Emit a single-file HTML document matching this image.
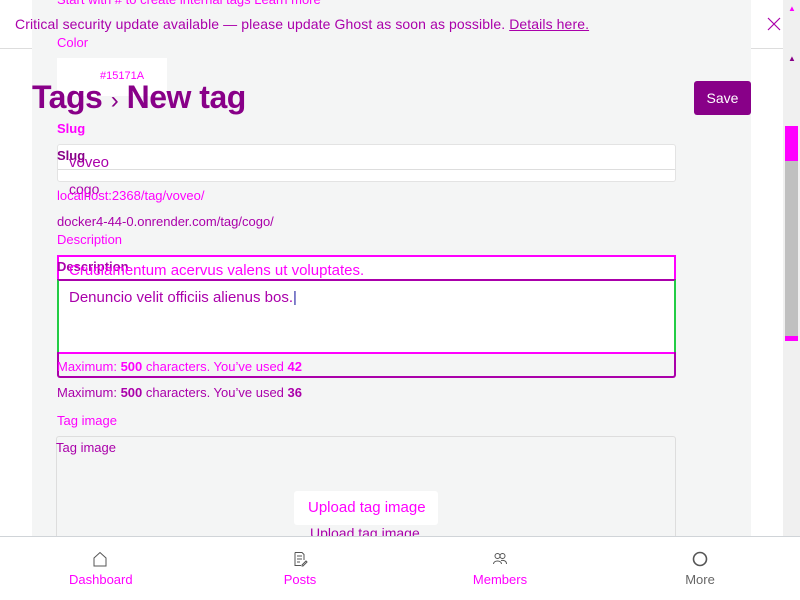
<!DOCTYPE html>
<html><head><meta charset="utf-8"><style>
*{margin:0;padding:0;box-sizing:border-box}
body{width:800px;height:600px;overflow:hidden;background:#fff;font-family:"Liberation Sans",sans-serif;position:relative;font-size:14px}
.a{position:absolute;white-space:nowrap}
.m{color:#f0f}.p{color:#a0a}.d{color:#808}
</style></head><body>
<div class="a" style="left:0;top:48px;width:783px;height:1px;background:#ddd"></div>
<div class="a" style="left:32px;top:0;width:719px;height:536px;background:#f4f5f5"></div>
<div class="a m" style="left:57px;top:-8px;font-size:13px">Start with # to create internal tags Learn more</div>
<div class="a p" style="left:15px;top:16px;font-size:14px;letter-spacing:0.1px">Critical security update available — please update Ghost as soon as possible. <u>Details here.</u></div>
<svg class="a" style="left:767px;top:17px" width="14" height="14" viewBox="0 0 14 14" stroke="#a0a" stroke-width="1.2"><path d="M1 1L13 13M13 1L1 13"/></svg>
<div class="a m" style="left:57px;top:35px;font-size:13px">Color</div>
<div class="a" style="left:57px;top:58px;width:110px;height:38px;background:#fff"></div>
<div class="a m" style="left:100px;top:70px;font-size:11px">#15171A</div>
<div class="a d" style="left:32px;top:79px;font-size:32px;font-weight:bold;letter-spacing:-0.5px">Tags <span style="font-weight:normal;font-size:24px">›</span> New tag</div>
<div class="a" style="left:694px;top:81px;width:57px;height:34px;background:#808;border-radius:3px;color:#fff;font-size:14px;text-align:center;line-height:34px">Save</div>
<div class="a m" style="left:57px;top:121px;font-size:13px;font-weight:bold">Slug</div>
<div class="a" style="left:57px;top:144px;width:619px;height:38px;background:#fff;border:1px solid #e3e3e3;border-radius:3px"></div>
<div class="a" style="left:58px;top:169px;width:617px;height:1px;background:#ddd"></div>
<div class="a d" style="left:57px;top:148px;font-size:13px;font-weight:bold">Slug</div>
<div class="a p" style="left:69px;top:154px;font-size:15px">voveo</div>
<div class="a p" style="left:69px;top:181px;font-size:14px">cogo</div>
<div class="a m" style="left:57px;top:188px;font-size:13px">localhost:2368/tag/voveo/</div>
<div class="a p" style="left:57px;top:214px;font-size:13px">docker4-44-0.onrender.com/tag/cogo/</div>
<div class="a m" style="left:57px;top:232px;font-size:13px">Description</div>
<div class="a" style="left:57px;top:255px;width:619px;height:26px;background:#fff;border:2px solid #f0f;border-bottom:none"></div>
<div class="a" style="left:57px;top:279px;width:619px;height:75px;background:#fff;border-top:2px solid #a0a;border-left:2px solid #2c4;border-right:2px solid #2c4;border-bottom:2px solid #f0f"></div>
<div class="a" style="left:57px;top:352px;width:619px;height:26px;border:2px solid #a0a;border-top:none;border-radius:0 0 3px 3px"></div>
<div class="a p" style="left:57px;top:259px;font-size:13px;font-weight:bold">Description</div>
<div class="a m" style="left:69px;top:262px;font-size:15px">Cruciamentum acervus valens ut voluptates.</div>
<div class="a p" style="left:69px;top:289px;font-size:15px">Denuncio velit officiis alienus bos.<span style="color:#33a">|</span></div>
<div class="a m" style="left:57px;top:359px;font-size:13px">Maximum: <b>500</b> characters. You’ve used <b>42</b></div>
<div class="a p" style="left:57px;top:385px;font-size:13px">Maximum: <b>500</b> characters. You’ve used <b>36</b></div>
<div class="a m" style="left:57px;top:413px;font-size:13px">Tag image</div>
<div class="a" style="left:56px;top:436px;width:620px;height:110px;border:1px solid #ddd;border-radius:3px"></div>
<div class="a p" style="left:56px;top:440px;font-size:13px">Tag image</div>
<div class="a" style="left:294px;top:491px;width:144px;height:34px;background:#fff;border-radius:3px"></div>
<div class="a m" style="left:308px;top:499px;font-size:15px">Upload tag image</div>
<div class="a p" style="left:310px;top:525px;font-size:14px">Upload tag image</div>
<div class="a" style="left:783px;top:0;width:17px;height:536px;background:#f0f0f0"></div>
<div class="a m" style="left:788px;top:4px;font-size:8px">▲</div>
<div class="a d" style="left:788px;top:54px;font-size:8px">▲</div>
<div class="a" style="left:785px;top:126px;width:13px;height:215px;background:#c0c0c0"></div>
<div class="a" style="left:785px;top:126px;width:13px;height:35px;background:#f0f"></div>
<div class="a" style="left:785px;top:336px;width:13px;height:5px;background:#f0f"></div>
<div class="a" style="left:0;top:536px;width:800px;height:64px;background:#fff;border-top:1px solid #d0d4d8"></div>
<svg class="a" style="left:92px;top:551px" width="16" height="16" viewBox="0 0 16 16" fill="none" stroke="#555" stroke-width="1"><path d="M2 7L8 1.5L14 7V15H2Z"/></svg>
<svg class="a" style="left:292px;top:551px" width="16" height="16" viewBox="0 0 16 16" fill="none" stroke="#555" stroke-width="1"><path d="M3 1.5H10L12 3.5V9M3 1.5V14.5H9M5 5H10M5 8H10M5 11H8M10 14L14 10L15 11L11 15H10Z"/></svg>
<svg class="a" style="left:492px;top:551px" width="16" height="16" viewBox="0 0 16 16" fill="none" stroke="#555" stroke-width="1"><circle cx="5.5" cy="5" r="2.5"/><circle cx="10.5" cy="5" r="2.5"/><path d="M1.5 13C1.5 9 9.5 9 9.5 13M9 9.5C12 9 14.5 10 14.5 13"/></svg>
<svg class="a" style="left:692px;top:551px" width="16" height="16" viewBox="0 0 16 16" fill="none" stroke="#555" stroke-width="1.6"><circle cx="8" cy="8" r="6.5"/></svg>
<div class="a m" style="left:69px;top:572px;font-size:13px;width:62px;text-align:center">Dashboard</div>
<div class="a m" style="left:280px;top:572px;font-size:13px;width:40px;text-align:center">Posts</div>
<div class="a m" style="left:470px;top:572px;font-size:13px;width:60px;text-align:center">Members</div>
<div class="a" style="left:680px;top:572px;font-size:13px;width:40px;text-align:center;color:#666">More</div>
</body></html>
